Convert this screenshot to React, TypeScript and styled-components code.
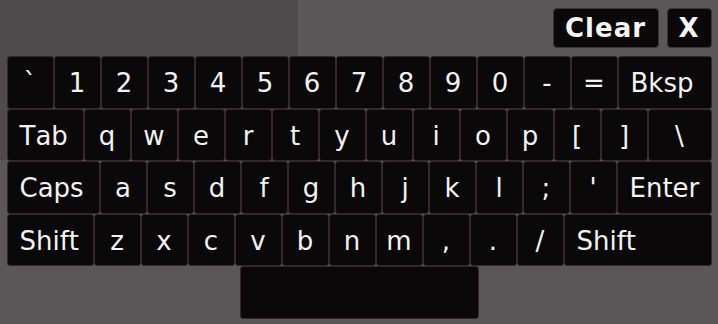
import React from "react";
import styled, { createGlobalStyle } from "styled-components";

const GlobalStyle = createGlobalStyle`
  html, body {
    margin: 0;
    padding: 0;
  }

  body {
    width: 718px;
    height: 324px;
    overflow: hidden;
    font-family: "DejaVu Sans", "Liberation Sans", sans-serif;
    background:
      linear-gradient(#4f4a4c, #4f4a4c) 0 0 / 298px 160px no-repeat,
      #5b5658;
  }
`;

const Screen = styled.div`
  display: flex;
  flex-direction: column;
  padding: 8px 6px 0 6.5px;
  gap: 8px;
`;

const TopBar = styled.div`
  display: flex;
  justify-content: flex-end;
  gap: 8px;
  padding-right: 0.5px;
`;

const TopButton = styled.button<{ $w: number }>`
  width: ${(p) => p.$w}px;
  height: 40px;
  padding: 0;
  background: #0a0809;
  border: 1.5px solid #3a3638;
  border-radius: 4px;
  color: #f4f4f4;
  font-family: "DejaVu Sans", sans-serif;
  font-weight: bold;
  font-size: 26px;
  letter-spacing: 1px;
  display: flex;
  align-items: center;
  justify-content: center;
`;

const Keyboard = styled.div`
  width: 705px;
  display: flex;
  flex-direction: column;
`;

const Row = styled.div<{ $center?: boolean }>`
  display: flex;
  justify-content: ${(p) => (p.$center ? "center" : "flex-start")};
`;

const Key = styled.div<{ $w?: number; $wide?: boolean; $fill?: boolean }>`
  box-sizing: border-box;
  width: ${(p) => (p.$fill ? "auto" : `${p.$w ?? 47}px`)};
  flex: ${(p) => (p.$fill ? "1" : "none")};
  height: 52.5px;
  background: #0a0809;
  border: 1.5px solid #2f2b2d;
  border-radius: 3px;
  color: #f2f2f2;
  font-size: 26px;
  display: flex;
  align-items: center;
  justify-content: ${(p) => (p.$wide ? "flex-start" : "center")};
  padding-left: ${(p) => (p.$wide ? "12px" : "0")};
  padding-top: 2px;
  font-kerning: none;
  white-space: pre;
`;

type K = { label: string; w?: number; wide?: boolean; fill?: boolean };

const rows: K[][] = [
  [
    ..."`1234567890-=".split("").map((c) => ({ label: c })),
    { label: "Bksp", wide: true, fill: true },
  ],
  [
    { label: "Tab", w: 77, wide: true },
    ..."qwertyuiop[]".split("").map((c) => ({ label: c })),
    { label: "\\", fill: true },
  ],
  [
    { label: "Caps", w: 93, wide: true },
    ..."asdfghjkl;'".split("").map((c) => ({ label: c })),
    { label: "Enter", wide: true, fill: true },
  ],
  [
    { label: "Shift", w: 87, wide: true },
    ..."zxcvbnm,./".split("").map((c) => ({ label: c })),
    { label: "Shift", wide: true, fill: true },
  ],
];

const App = () => {
  return (
    <>
      <GlobalStyle />
      <Screen>
        <TopBar>
          <TopButton $w={106}>Clear</TopButton>
          <TopButton $w={45}>X</TopButton>
        </TopBar>
        <Keyboard>
          {rows.map((row, i) => (
            <Row key={i}>
              {row.map((k, j) => (
                <Key key={j} $w={k.w} $wide={k.wide} $fill={k.fill}>
                  {k.label}
                </Key>
              ))}
            </Row>
          ))}
          <Row $center>
            <Key $w={239} />
          </Row>
        </Keyboard>
      </Screen>
    </>
  );
};

export default App;
